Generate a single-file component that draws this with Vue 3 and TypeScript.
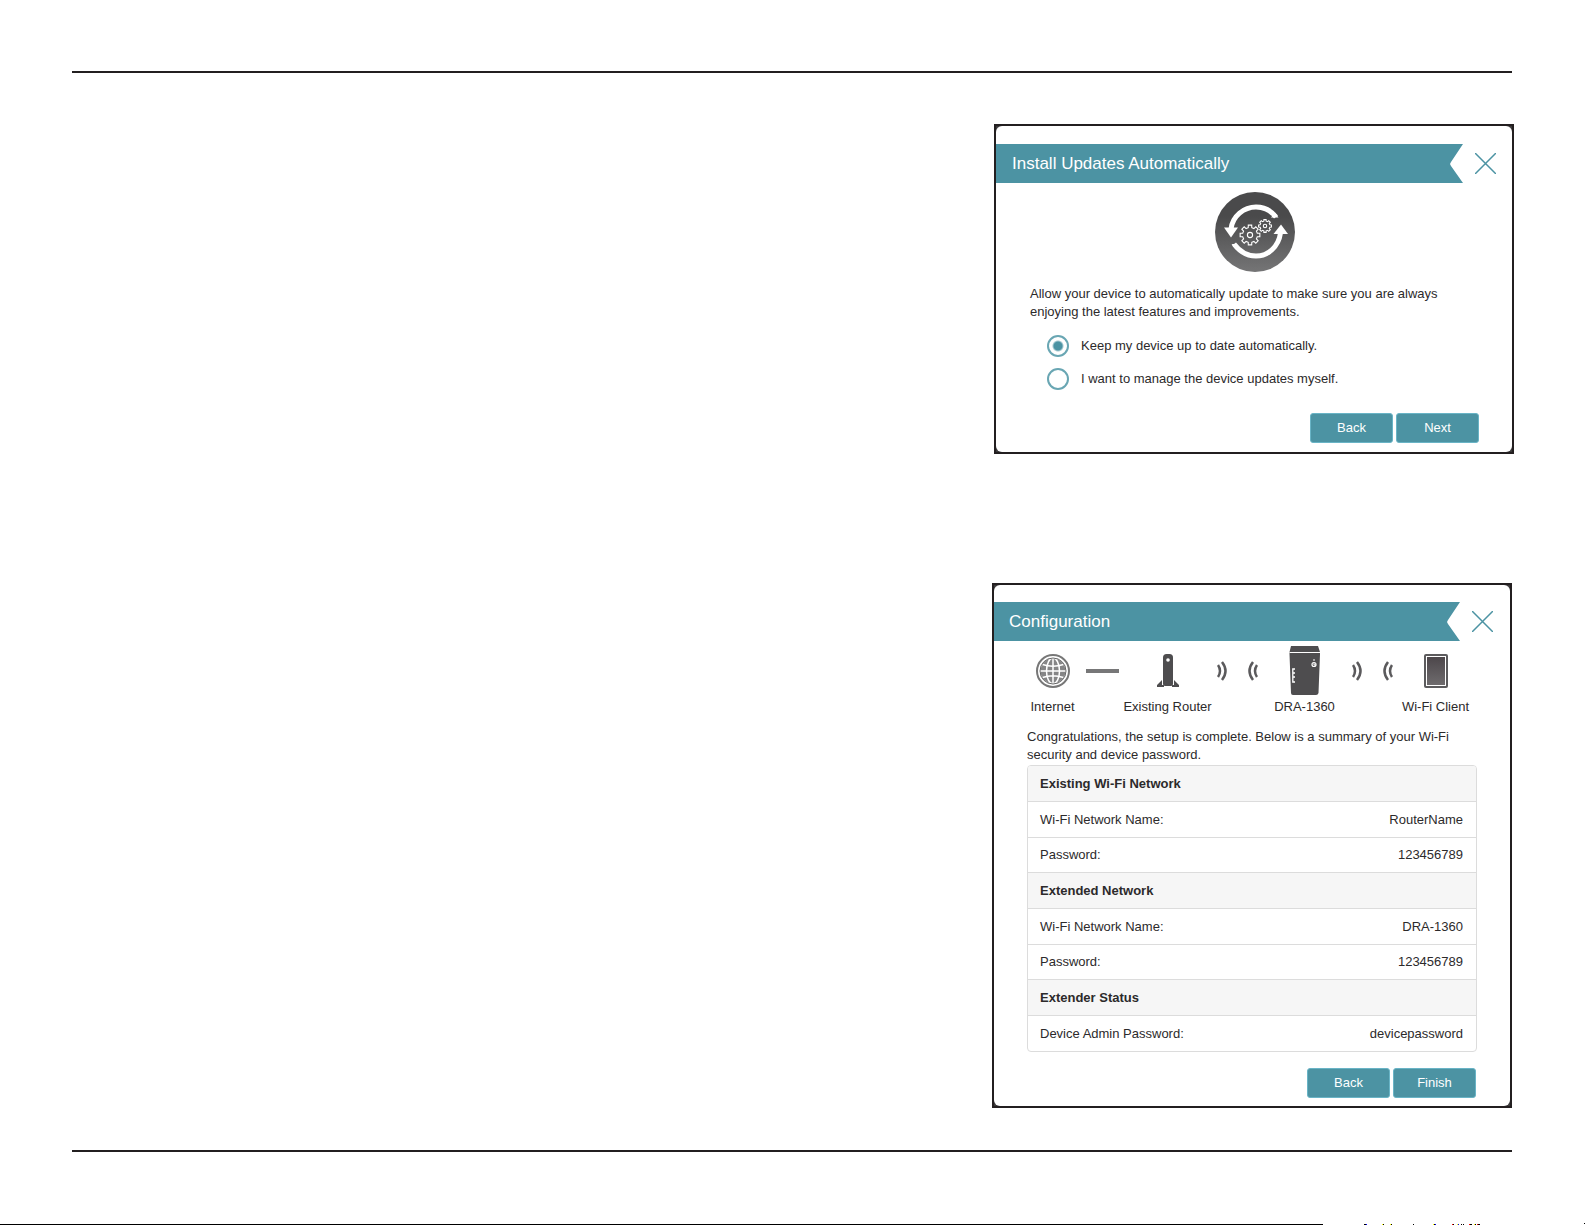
<script setup lang="ts">
import { ref } from 'vue'

interface Row {
  label: string
  value: string
}
interface Section {
  title: string
  rows: Row[]
}

const updateMode = ref('auto')
const modes = [
  { value: 'auto', label: 'Keep my device up to date automatically.' },
  { value: 'manual', label: 'I want to manage the device updates myself.' },
]

const sections: Section[] = [
  {
    title: 'Existing Wi-Fi Network',
    rows: [
      { label: 'Wi-Fi Network Name:', value: 'RouterName' },
      { label: 'Password:', value: '123456789' },
    ],
  },
  {
    title: 'Extended Network',
    rows: [
      { label: 'Wi-Fi Network Name:', value: 'DRA-1360' },
      { label: 'Password:', value: '123456789' },
    ],
  },
  {
    title: 'Extender Status',
    rows: [{ label: 'Device Admin Password:', value: 'devicepassword' }],
  },
]

// Outline of a cog with alternating tooth and gap points
function gear(cx: number, cy: number, outer: number, inner: number): string {
  const points: string[] = []
  for (let i = 0; i < 8; i++) {
    const base = (i * Math.PI) / 4
    const steps: [number, number][] = [
      [-0.24, inner],
      [-0.17, outer],
      [0.17, outer],
      [0.24, inner],
    ]
    for (const [offset, r] of steps) {
      points.push(`${cx + Math.cos(base + offset) * r} ${cy + Math.sin(base + offset) * r}`)
    }
  }
  return `M${points.join('L')}Z`
}
const largeGear = gear(35, 43, 10, 7.5)
const smallGear = gear(50, 34, 6.5, 5)
</script>

<template>
  <div class="page">
    <hr class="rule" />
    <main class="content">
      <section class="dialog updates">
        <div class="sheet">
          <header class="bar">
            <h2>Install Updates Automatically</h2>
            <button class="close" type="button" aria-label="Close">
              <svg width="21" height="21" viewBox="0 0 21 21"><path d="M0 0L21 21M21 0L0 21" /></svg>
            </button>
          </header>
          <svg class="sync" width="80" height="80" viewBox="0 0 80 80">
            <defs>
              <linearGradient id="disc" x1="0" y1="0" x2="0" y2="1">
                <stop offset="0.3" stop-color="#4a4a4b" />
                <stop offset="1" stop-color="#757576" />
              </linearGradient>
            </defs>
            <circle cx="40" cy="40" r="40" fill="url(#disc)" />
            <path d="M16 37C17.500 24 29 15 41 15C49 15 56 18.500 61 25" fill="none" stroke="#fff" stroke-width="5" />
            <path d="M56 25.500H63.500L60 20.500Z" fill="#fff" />
            <path d="M9 35.500H23L16 45.500Z" fill="#fff" />
            <path d="M19 52C25 60 33 64 41 64C53 64 63.500 55 65.500 41" fill="none" stroke="#fff" stroke-width="5" />
            <path d="M16.500 52H22L20 56Z" fill="#fff" />
            <path d="M58.500 42H73L66 32.500Z" fill="#fff" />
            <g fill="none" stroke="#fff" stroke-width="1.100">
              <path :d="largeGear" />
              <circle cx="35" cy="43" r="2.600" />
              <path :d="smallGear" />
              <circle cx="50" cy="34" r="1.700" />
            </g>
          </svg>
          <p class="lead">Allow your device to automatically update to make sure you are always enjoying the latest features and improvements.</p>
          <div class="choices">
            <label v-for="mode in modes" :key="mode.value" class="choice">
              <input v-model="updateMode" type="radio" name="update-mode" :value="mode.value" />
              <span>{{ mode.label }}</span>
            </label>
          </div>
          <div class="actions">
            <button type="button" class="btn">Back</button>
            <button type="button" class="btn">Next</button>
          </div>
        </div>
      </section>

      <section class="dialog summary">
        <div class="sheet">
          <header class="bar">
            <h2>Configuration</h2>
            <button class="close" type="button" aria-label="Close">
              <svg width="21" height="21" viewBox="0 0 21 21"><path d="M0 0L21 21M21 0L0 21" /></svg>
            </button>
          </header>
          <div class="topology">
            <div class="node">
              <svg width="36" height="50" viewBox="0 0 36 50">
                <circle cx="18" cy="25" r="16" fill="#fff" stroke="#777" stroke-width="2" />
                <circle cx="18" cy="25" r="12.500" fill="#858586" />
                <g fill="none" stroke="#fff" stroke-width="1.500">
                  <path d="M18 12V38M5 25H31M7.500 18.500Q18 22 28.500 18.500M7.500 31.500Q18 28 28.500 31.500" />
                  <ellipse cx="18" cy="25" rx="6.500" ry="13" />
                </g>
                <circle cx="18" cy="25" r="13" fill="none" stroke="#666" stroke-width="1" />
              </svg>
              <span>Internet</span>
            </div>
            <svg class="link" width="33" height="50" viewBox="0 0 33 50"><path d="M0 25H33" stroke="#777778" stroke-width="4" /></svg>
            <div class="node">
              <svg width="24" height="50" viewBox="0 0 24 50">
                <path d="M7 11.500Q7 8 10.500 8H13.500Q17 8 17 11.500V38Q17 40 15 40H9Q7 40 7 38Z" fill="#4e4d4f" />
                <circle cx="12" cy="14" r="1.800" fill="#fff" />
                <path d="M6 34V41H1V39ZM18 34V41H23V39Z" fill="#4e4d4f" />
                <path d="M1 40H8M16 40H23" stroke="#4e4d4f" stroke-width="2" />
              </svg>
              <span>Existing Router</span>
            </div>
            <div class="waves from-router">
              <svg width="10" height="50" viewBox="0 0 10 50"><path d="M1 19Q5 25 1 31M5 16Q12 25 5 34" /></svg>
              <svg width="10" height="50" viewBox="0 0 10 50"><path d="M9 19Q5 25 9 31M5 16Q-2 25 5 34" /></svg>
            </div>
            <div class="node">
              <svg width="32" height="50" viewBox="0 0 32 50">
                <path d="M2 0H29L31 6V8L29.500 47Q29 49 27 49H4Q2 49 2 47L.5 8V6Z" fill="#4e4d4f" />
                <path d="M.5 6.500H31" stroke="#fff" stroke-width="1" />
                <path d="M6 23H3.800V36H6M4 27H6M4 31H6" fill="none" stroke="#fff" stroke-width="1.300" />
                <circle cx="25" cy="18.500" r="2" fill="none" stroke="#fff" stroke-width="1.200" />
                <path d="M25 13V15M25 17V19H27" fill="none" stroke="#fff" stroke-width="1" />
              </svg>
              <span>DRA-1360</span>
            </div>
            <div class="waves to-client">
              <svg width="10" height="50" viewBox="0 0 10 50"><path d="M1 19Q5 25 1 31M5 16Q12 25 5 34" /></svg>
              <svg width="10" height="50" viewBox="0 0 10 50"><path d="M9 19Q5 25 9 31M5 16Q-2 25 5 34" /></svg>
            </div>
            <div class="node">
              <svg width="26" height="50" viewBox="0 0 26 50">
                <defs>
                  <linearGradient id="screen" x1="0" y1="0" x2="0" y2="1">
                    <stop offset="0" stop-color="#4c464a" />
                    <stop offset="1" stop-color="#6f6c6e" />
                  </linearGradient>
                </defs>
                <rect x="1" y="8" width="24" height="34" rx="2" fill="#5c5b5d" />
                <rect x="3.500" y="10.500" width="19" height="29" fill="url(#screen)" stroke="#fff" stroke-width="1" />
              </svg>
              <span>Wi-Fi Client</span>
            </div>
          </div>
          <p class="lead">Congratulations, the setup is complete. Below is a summary of your Wi-Fi security and device password.</p>
          <div class="frame">
            <table>
              <tbody v-for="section in sections" :key="section.title">
                <tr class="group">
                  <th colspan="2" scope="rowgroup">{{ section.title }}</th>
                </tr>
                <tr v-for="(row, i) in section.rows" :key="row.label" :class="{ second: i === 1 }">
                  <th scope="row">{{ row.label }}</th>
                  <td>{{ row.value }}</td>
                </tr>
              </tbody>
            </table>
          </div>
          <div class="actions">
            <button type="button" class="btn">Back</button>
            <button type="button" class="btn">Finish</button>
          </div>
        </div>
      </section>
    </main>
    <hr class="rule" />
    <div class="edge">
      <div class="edge-line"></div>
      <svg width="262" height="2" viewBox="0 0 262 2" shape-rendering="crispEdges">
        <path d="M41 1.500h2M60 1.500h1M68 1.500h1M90 1.500h1M111 1.500h1M130 1.500h1M135 1.500h1M138 1.500h1M140 1.500h1M147 1.500h2M152 1.500h1M155 1.500h2M261 .5h1" stroke="#000" />
        <path d="M43 1.500h1M112 1.500h1M135 1.500h1" stroke="#00f" />
        <path d="M59 1.500h1M67 1.500h1M110 1.500h1M134 1.500h1M151 1.500h1" stroke="#ff0" />
        <path d="M129 1.500h1M146 1.500h1M154 1.500h1" stroke="#f00" />
      </svg>
    </div>
  </div>
</template>

<style>
body {
  margin: 0;
  background: #fff;
}
</style>

<style scoped>
.page {
  box-sizing: border-box;
  min-height: 100vh;
  padding-top: 71px;
  display: flex;
  flex-direction: column;
  color: #2c2a2b;
  font-family: "Liberation Sans", Arial, sans-serif;
  font-size: 13px;
  line-height: 18px;
}
.rule {
  box-sizing: border-box;
  height: 2px;
  margin: 0 73px 0 72px;
  border: 0;
  background: #231f20;
}
.content {
  display: flex;
  flex-direction: column;
  align-items: flex-end;
  gap: 129px;
  padding: 51px 71px 42px 72px;
}
.dialog {
  box-sizing: border-box;
  width: 520px;
  max-width: 100%;
  border: 2px solid #231f20;
  background: #3c3a3b;
}
.summary {
  margin-right: 2px;
}
.sheet {
  display: flex;
  flex-direction: column;
  padding-top: 18px;
  border-radius: 6px;
  background: #fff;
}
.summary .sheet {
  padding-top: 17px;
}
.bar {
  position: relative;
  display: flex;
  align-items: center;
  justify-content: space-between;
  height: 39px;
  padding: 0 16px;
}
.summary .bar {
  padding: 0 17px 0 15px;
}
.bar::before {
  content: "";
  position: absolute;
  inset: 0 49px 0 0;
  background: #4c93a3;
  clip-path: polygon(0 0, 100% 0, calc(100% - 12px) 18px, calc(100% - 13px) 20px, calc(100% - 12px) 22px, 100% 100%, 0 100%);
}
.summary .bar::before {
  right: 50px;
}
.bar h2 {
  position: relative;
  margin: 0;
  color: #fff;
  font-size: 17px;
  font-weight: 400;
  line-height: 20px;
}
.close {
  display: flex;
  padding: 0;
  border: 0;
  background: none;
}
.close path {
  stroke: #4c93a3;
  stroke-width: 1.5;
}
.sync {
  align-self: center;
  margin: 9px 0 0 2px;
}
.lead {
  margin: 0 34px;
}
.updates .lead {
  margin-top: 13px;
}
.choices {
  display: flex;
  flex-direction: column;
  gap: 11px;
  margin: 14px 51px 0;
}
.choice {
  display: flex;
  align-items: center;
  gap: 12px;
}
.choice input {
  appearance: none;
  box-sizing: border-box;
  width: 22px;
  height: 22px;
  margin: 0;
  border: 2px solid #69a6b3;
  border-radius: 50%;
  background: #fff;
}
.choice input:checked {
  background: radial-gradient(circle, #4c93a3 4px, #fff 6px);
}
.actions {
  display: flex;
  justify-content: flex-end;
  gap: 3px;
  margin: 23px 33px 9px;
}
.summary .actions {
  margin: 16px 34px 8px;
}
.btn {
  box-sizing: border-box;
  width: 83px;
  height: 30px;
  padding: 0;
  border: 1px solid #69b4c6;
  border-radius: 3px;
  background: #4c93a3;
  color: #fff;
  font: inherit;
}
.topology {
  display: grid;
  grid-template-columns: 45fr 48fr 89fr 62fr 61fr 66fr 69fr;
  margin: 5px 40px 0 36px;
}
.node {
  display: flex;
  flex-direction: column;
  align-items: center;
  gap: 2px;
  white-space: nowrap;
}
.node svg,
.waves svg,
.link {
  display: block;
}
.link {
  justify-self: end;
  margin-right: 4px;
}
.waves {
  display: flex;
  gap: 21px;
}
.from-router {
  justify-self: start;
  margin-left: 5px;
}
.to-client {
  justify-self: end;
  margin-right: 8px;
}
.waves path {
  fill: none;
  stroke: #5b5a5c;
  stroke-width: 2.5;
}
.summary .lead {
  margin: 12px 33px 1px;
}
.frame {
  margin: 0 33px;
  border: 1px solid #dcdcdc;
  border-radius: 4px;
  overflow: hidden;
}
table {
  width: 100%;
  border-collapse: separate;
  border-spacing: 0;
}
th,
td {
  box-sizing: border-box;
  height: 36px;
  padding: 0 13px 0 12px;
  border-bottom: 1px solid #dcdcdc;
  font-weight: 400;
  text-align: left;
}
td {
  text-align: right;
}
.second th,
.second td {
  height: 35px;
}
.group th {
  background: #f6f6f6;
  font-weight: 700;
}
tbody:last-child tr:last-child > * {
  height: 35px;
  border-bottom: 0;
}
.edge {
  display: flex;
  align-items: flex-end;
  margin-top: auto;
}
.edge-line {
  flex: 1;
  height: 1px;
  background: #000;
}
.edge svg {
  display: block;
}
</style>
